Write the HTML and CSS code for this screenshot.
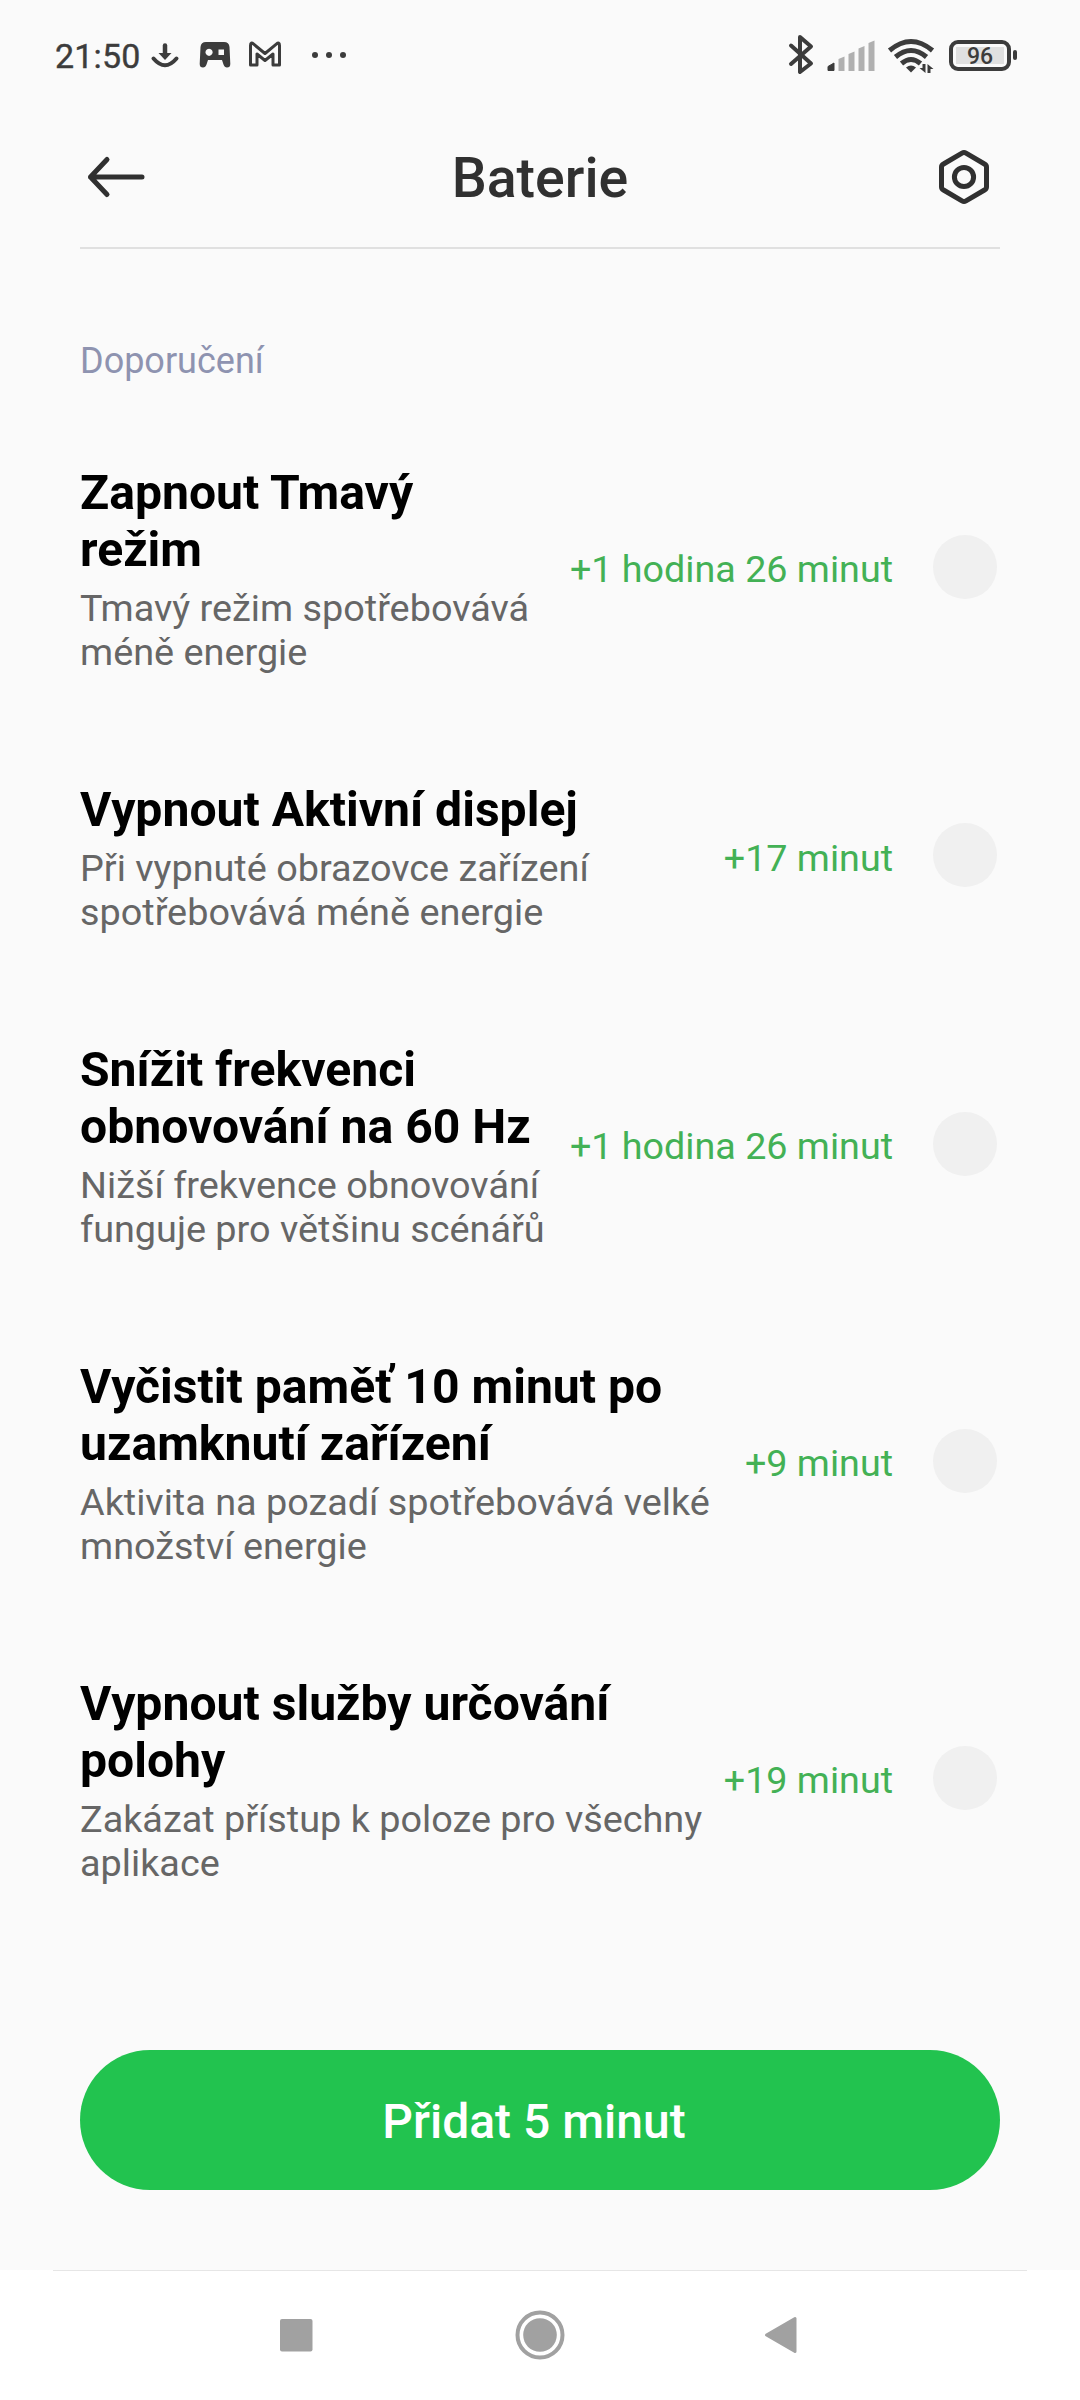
FILE: index.html
```html
<!DOCTYPE html>
<html lang="cs">
<head>
    <meta charset="UTF-8">
    <meta name="viewport" content="width=device-width, initial-scale=1.0">
    <title>Baterie</title>
    <link rel="stylesheet" href="styles.css">
</head>
<body>
    <div class="status-bar">
        <span class="time">21:50</span>
        <svg class="status-left" width="210" height="50" viewBox="145 30 210 50">
            <g fill="none" stroke="#3c3c3c" stroke-linecap="round" stroke-linejoin="round">
                <path d="M165 45.500v9" stroke-width="4.500"/>
                <path d="M153.500 58.500q11.500 13.500 23 0" stroke-width="4"/>
                <path d="M250.500 65V45.500q0-4 3.200-1.300L265 53.500l11.300-9.300q3.200-2.700 3.200 1.300V65h-6.500V54l-8 6.500-8-6.500v11z" stroke-width="3"/>
            </g>
            <path d="M158.500 53h13L165 60z" fill="#3c3c3c"/>
            <path fill="#3c3c3c" fill-rule="evenodd" d="M206 42h18q5 0 5.500 5l.8 17q0 3.500-3.300 3.500-2.500 0-3.500-3l-1.500-4.500h-14l-1.500 4.500q-1 3-3.500 3-3.300 0-3.300-3.500l.8-17q.5-5 5.500-5zM209 48.700a3.600 3.600 0 1 0 .1 0zM218.500 49.500v5.500h5.500v-5.500z"/>
            <g fill="#3c3c3c"><circle cx="315" cy="55" r="3"/><circle cx="329" cy="55" r="3"/><circle cx="343" cy="55" r="3"/></g>
        </svg>
        <svg class="status-right" width="160" height="50" viewBox="780 30 160 50">
            <path d="M791 45.500l20 18L800 72V37l11 9.500-20 17.500" fill="none" stroke="#3c3c3c" stroke-width="4" stroke-linejoin="round" stroke-linecap="round"/>
            <path d="M828 70.500v-4l6-3.500v7.500z" fill="#3c3c3c" stroke="#3c3c3c" stroke-linejoin="round"/>
            <path d="M838.500 71V59l6-2.500V71zM848.500 71V54l6-2.500V71zM858.500 71V48.500l6-2.500V71zM868.500 71V43l6-2.500V71z" fill="#b0b0b0"/>
            <g fill="none" stroke="#3c3c3c" stroke-width="5">
                <path d="M889.500 50.500q21.500-18 43 0"/>
                <path d="M895.500 57q15.500-13 31 0"/>
                <path d="M901.500 63.500q9.500-8 19 0"/>
            </g>
            <path d="M906 67.500q5-4 10 0l-5 5z" fill="#3c3c3c"/>
            <path d="M925.500 64v9l-6-5h3v-4zM927.500 73v-9l6 5h-3v4z" fill="#3c3c3c"/>
        </svg>
        <div class="battery"><span class="battery-level">96</span></div>
        <span class="battery-tip"></span>
    </div>

    <header class="header">
        <svg width="60" height="60" viewBox="0 0 60 60" fill="none" stroke="#303030" stroke-width="5" stroke-linecap="round" stroke-linejoin="round">
            <path d="M56 30H4.500M21 12.500L4.500 30 21 47.500"/>
        </svg>
        <h1 class="title">Baterie</h1>
        <svg width="60" height="60" viewBox="0 0 60 60" fill="none" stroke="#303030" stroke-width="5" stroke-linejoin="round">
            <path d="M30 5.500q1 0 2 .6L50.500 17q2 1.100 2 3v20q0 1.900-2 3L32 53.900q-2 1.200-4 0L9.500 43q-2-1.100-2-3V20q0-1.900 2-3L28 6.100q1-.6 2-.6z"/>
            <circle cx="30" cy="30" r="9.600"/>
        </svg>
    </header>

    <main class="content">
        <h2 class="section">Doporučení</h2>
        <div class="item">
            <div class="text">
                <div class="name">Zapnout Tmavý<br>režim</div>
                <div class="desc">Tmavý režim spotřebovává<br>méně energie</div>
            </div>
            <span class="gain">+1 hodina 26 minut</span>
            <span class="check"></span>
        </div>
        <div class="item">
            <div class="text">
                <div class="name">Vypnout Aktivní displej</div>
                <div class="desc">Při vypnuté obrazovce zařízení<br>spotřebovává méně energie</div>
            </div>
            <span class="gain">+17 minut</span>
            <span class="check"></span>
        </div>
        <div class="item">
            <div class="text">
                <div class="name">Snížit frekvenci<br>obnovování na 60 Hz</div>
                <div class="desc">Nižší frekvence obnovování<br>funguje pro většinu scénářů</div>
            </div>
            <span class="gain">+1 hodina 26 minut</span>
            <span class="check"></span>
        </div>
        <div class="item">
            <div class="text">
                <div class="name">Vyčistit paměť 10 minut po<br>uzamknutí zařízení</div>
                <div class="desc">Aktivita na pozadí spotřebovává velké<br>množství energie</div>
            </div>
            <span class="gain">+9 minut</span>
            <span class="check"></span>
        </div>
        <div class="item">
            <div class="text">
                <div class="name">Vypnout služby určování<br>polohy</div>
                <div class="desc">Zakázat přístup k poloze pro všechny<br>aplikace</div>
            </div>
            <span class="gain">+19 minut</span>
            <span class="check"></span>
        </div>
    </main>

    <button class="button">Přidat 5 minut</button>

    <nav class="nav">
        <svg width="50" height="50" viewBox="0 0 50 50"><rect x="9" y="9" width="32.500" height="32.500" rx="2" fill="#a1a1a1"/></svg>
        <svg class="home" width="50" height="50" viewBox="0 0 50 50"><circle cx="25" cy="25" r="22.500" fill="none" stroke="#a1a1a1" stroke-width="4"/><circle cx="25" cy="25" r="16.800" fill="#a1a1a1"/></svg>
        <svg width="50" height="50" viewBox="0 0 50 50"><path d="M10.500 25L39 8.500v33z" fill="#a1a1a1" stroke="#a1a1a1" stroke-width="3" stroke-linejoin="round"/></svg>
    </nav>
</body>
</html>
```
FILE: styles.css
```css
* {
    box-sizing: border-box;
}
body {
    margin: 0;
    width: 1080px;
    height: 2400px;
    background: #fafafa;
    font-family: Roboto, 'Noto Sans', sans-serif;
    display: flex;
    flex-direction: column;
    overflow: hidden;
}
svg {
    display: block;
    flex: none;
}
.status-bar {
    height: 110px;
    padding-left: 55px;
    display: flex;
    align-items: center;
    color: #3c3c3c;
}
.time {
    width: 90px;
    font-size: 34px;
    line-height: 40px;
    padding-top: 2px;
    letter-spacing: 0.2px;
    -webkit-text-stroke: 0.4px #3c3c3c;
}
.status-right {
    margin-left: auto;
}
.battery {
    width: 62px;
    height: 31px;
    margin-left: 9px;
    border: 4px solid #3c3c3c;
    border-radius: 9px;
    padding: 3px;
    display: flex;
}
.battery-level {
    flex: 1;
    background: #e0e0e0;
    font-size: 23px;
    line-height: 19px;
    text-align: center;
    font-weight: 500;
}
.battery-tip {
    width: 4px;
    height: 10px;
    margin: 0 63px 0 2px;
    border-radius: 2px;
    background: #3c3c3c;
}
.header {
    height: 139px;
    margin: 0 80px;
    padding: 0 6px 4px;
    border-bottom: 2px solid #e0e0e0;
    display: flex;
    justify-content: space-between;
    align-items: center;
}
.title {
    margin: 4px 0 0;
    font-size: 55.5px;
    font-weight: 500;
    color: #303030;
}
.content {
    padding: 0 83px 0 80px;
}
.section {
    margin: 91px 0 26px;
    font-size: 36px;
    line-height: 42px;
    font-weight: 400;
    color: #8e93b0;
}
.item {
    height: 317px;
    display: flex;
    align-items: center;
    white-space: nowrap;
}
.item:nth-of-type(2) {
    height: 260px;
}
.text {
    flex: 1;
    padding-top: 5px;
}
.name {
    font-size: 48.1px;
    line-height: 57px;
    font-weight: 700;
    color: #000;
}
.desc {
    margin-top: 8px;
    font-size: 37.8px;
    line-height: 44px;
    color: #666;
}
.gain {
    margin: 5px 40px 0 0;
    font-size: 37.7px;
    color: #43b155;
}
.check {
    width: 64px;
    height: 64px;
    border-radius: 50%;
    background: #f0f0f0;
}
.button {
    height: 140px;
    margin: auto 80px 80px;
    padding: 2px 18px 0 6px;
    border: none;
    border-radius: 70px;
    background: #22c34f;
    color: #fff;
    font-family: inherit;
    font-size: 48px;
    font-weight: 500;
}
.nav {
    flex: none;
    height: 130px;
    background: linear-gradient(#e6e6e6, #e6e6e6) 53px 0 / 974px 1px no-repeat #fff;
    padding: 0 274px 1px 271px;
    display: flex;
    justify-content: space-between;
    align-items: center;
}
.home {
    margin-left: 3px;
}
```
